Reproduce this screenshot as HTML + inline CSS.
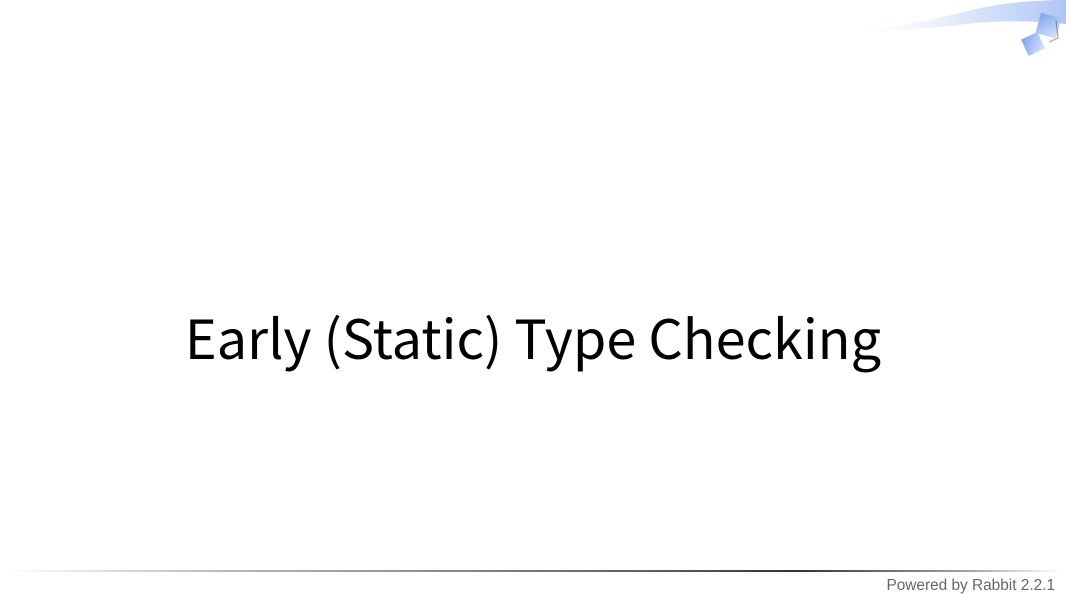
<!DOCTYPE html>
<html><head><meta charset="utf-8"><style>
html,body{margin:0;padding:0;}
body{width:1066px;height:600px;background:#fff;position:relative;overflow:hidden;font-family:"Liberation Sans","Noto Sans CJK JP",sans-serif;}
.title{position:absolute;left:0;width:1066px;top:301px;text-align:center;font-size:54px;line-height:70px;color:#000;font-family:"Noto Sans CJK JP","Liberation Sans",sans-serif;font-weight:400;}
.line{position:absolute;left:5px;width:1056px;top:570px;height:2px;background:linear-gradient(90deg,rgba(0,0,0,0) 0%,#bbb 20%,#555 65%,#333 75%,#aaa 92%,rgba(0,0,0,0) 100%);}
.foot{position:absolute;right:11px;top:577px;font-size:15.4px;color:#666;}
</style></head><body>
<svg style="position:absolute;left:830px;top:0" width="236" height="70">
<defs>
<linearGradient id="sw" x1="0" y1="0" x2="1" y2="0">
<stop offset="0" stop-color="#fff" stop-opacity="0"/>
<stop offset="0.5" stop-color="#e3ebfc"/>
<stop offset="1" stop-color="#aec6f5"/>
</linearGradient>
<linearGradient id="sq" x1="0" y1="0" x2="1" y2="1">
<stop offset="0" stop-color="#7ea2ef"/>
<stop offset="1" stop-color="#d8e4fb"/>
</linearGradient>
</defs>
<path d="M10 32 C70 28 110 18 150 8 C180 2 210 0 236 0 L236 24 C200 20 160 20 120 26 C80 30 40 32 10 32Z" fill="url(#sw)"/>
<rect x="208" y="15" width="21" height="21" fill="url(#sq)" transform="rotate(15 218 25)"/>
<path d="M226 20 L228 38 L219 42" stroke="#666" stroke-width="1.2" fill="none" opacity="0.6"/>
<rect x="194" y="35" width="18" height="18" fill="url(#sq)" transform="rotate(-25 203 44)"/>
</svg>
<div class="title">Early (Static) Type Checking</div>
<div class="line"></div>
<div class="foot">Powered by Rabbit 2.2.1</div>
</body></html>
